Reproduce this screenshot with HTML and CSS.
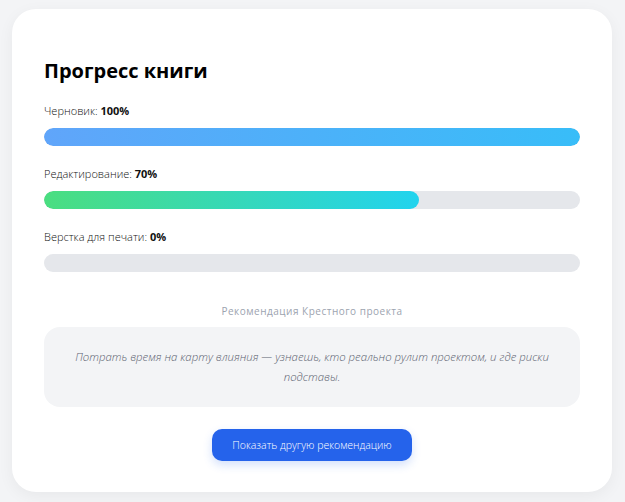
FILE: index.html
```html
<!DOCTYPE html>
<html lang="ru">
<head>
<meta charset="utf-8">
<title>Прогресс книги</title>
<link rel="stylesheet" href="styles.css">
</head>
<body>
<main class="card">
  <h2 class="title">Прогресс книги</h2>
  <div class="stages">
    <div class="stage">
      <div class="label">Черновик: <b>100%</b></div>
      <div class="track"><div class="fill fill-blue" style="width:100%"></div></div>
    </div>
    <div class="stage">
      <div class="label">Редактирование: <b>70%</b></div>
      <div class="track"><div class="fill fill-green" style="width:70%"></div></div>
    </div>
    <div class="stage">
      <div class="label">Верстка для печати: <b>0%</b></div>
      <div class="track"><div class="fill fill-green" style="width:0%"></div></div>
    </div>
  </div>
  <section class="rec">
    <div class="rec-title">Рекомендация Крестного проекта</div>
    <div class="rec-box">Потрать время на карту влияния — узнаешь, кто реально рулит проектом, и где риски подставы.</div>
    <div class="actions"><button class="btn" type="button">Показать другую рекомендацию</button></div>
  </section>
</main>
</body>
</html>
```
FILE: styles.css
```css
html, body {
  margin: 0;
  padding: 0;
}
body {
  background: #f3f4f6;
  font-family: "Open Sans", "Noto Sans", sans-serif;
  font-weight: 300;
  color: #111827;
  padding-top: 9px;
  height: 502px;
  box-sizing: border-box;
}
.card {
  width: 600px;
  margin-left: 12px;
  box-sizing: border-box;
  background: #fff;
  border-radius: 24px;
  padding: 32px 32px 31px;
  box-shadow: 0 4px 16px rgba(0,0,0,0.05);
}
.title {
  margin: 15px 0 17px;
  font-size: 20px;
  line-height: 30px;
  font-weight: 700;
  color: #000;
}
.stages {
  display: flex;
  flex-direction: column;
  gap: 20px;
}
.label {
  font-size: 11px;
  line-height: 16px;
  color: #111;
  margin-bottom: 9px;
}
.label b {
  font-weight: 700;
}
.track {
  height: 18px;
  border-radius: 9px;
  background: #e5e7eb;
  overflow: hidden;
}
.fill {
  height: 100%;
  border-radius: 9px;
}
.fill-blue {
  background: linear-gradient(90deg, #60a5fa, #38bdf8);
}
.fill-green {
  background: linear-gradient(90deg, #4ade80, #22d3ee);
}
.rec {
  margin-top: 32px;
}
.rec-title {
  text-align: center;
  font-size: 10px;
  line-height: 14px;
  font-weight: 400;
  color: #9ca3af;
  letter-spacing: 0.5px;
  margin-bottom: 9px;
}
.rec-box {
  background: #f3f4f6;
  border-radius: 16px;
  padding: 20px 24px 20px;
  text-align: center;
  font-style: italic;
  font-size: 11.4px;
  line-height: 20px;
  color: #5b6270;
}
.actions {
  display: flex;
  justify-content: center;
  margin-top: 22px;
}
.btn {
  height: 32px;
  padding: 0 20px;
  border: none;
  border-radius: 10px;
  background: #2563eb;
  color: #fff;
  font-family: "Open Sans", "Noto Sans", sans-serif;
  font-weight: 300;
  font-size: 10.5px;
  box-shadow: 0 4px 10px rgba(37,99,235,0.2);
  cursor: pointer;
}
```
